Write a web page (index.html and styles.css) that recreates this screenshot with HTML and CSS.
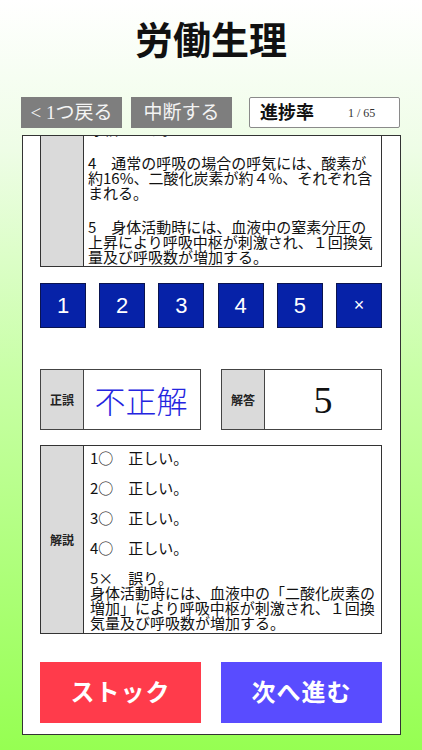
FILE: index.html
```html
<!DOCTYPE html>
<html lang="ja">
<head>
<meta charset="utf-8">
<link rel="stylesheet" href="styles.css">
</head>
<body>
<div class="screen">
  <h1 class="title">労働生理</h1>
  <div class="toolbar">
    <div class="tbtn">&lt; 1つ戻る</div>
    <div class="tbtn">中断する</div>
    <div class="progress"><span class="plabel">進捗率</span><span class="pnum">1 / 65</span></div>
  </div>
  <div class="panel">
    <div class="qbox">
      <div class="lab"></div>
      <div class="qtext">
        <p>呼吸という。</p>
        <p>4　通常の呼吸の場合の呼気には、酸素が<br>約16%、二酸化炭素が約４%、それぞれ含<br>まれる。</p>
        <p>5　身体活動時には、血液中の窒素分圧の<br>上昇により呼吸中枢が刺激され、１回換気<br>量及び呼吸数が増加する。</p>
      </div>
    </div>
    <div class="nums">
      <div class="num">1</div>
      <div class="num">2</div>
      <div class="num">3</div>
      <div class="num">4</div>
      <div class="num">5</div>
      <div class="num x">×</div>
    </div>
    <div class="results">
      <div class="rbox"><div class="rlab">正誤</div><div class="rval wrong">不正解</div></div>
      <div class="rbox"><div class="rlab">解答</div><div class="rval ans">5</div></div>
    </div>
    <div class="ebox">
      <div class="elab">解説</div>
      <div class="etext">
        <p>1○　正しい。</p>
        <p>2○　正しい。</p>
        <p>3○　正しい。</p>
        <p>4○　正しい。</p>
        <p>5×　誤り。<br>身体活動時には、血液中の「二酸化炭素の<br>増加」により呼吸中枢が刺激され、１回換<br>気量及び呼吸数が増加する。</p>
      </div>
    </div>
    <div class="actions">
      <div class="abtn stock">ストック</div>
      <div class="abtn next">次へ進む</div>
    </div>
  </div>
</div>
</body>
</html>
```

FILE: styles.css
```css
html, body {
  margin: 0;
  padding: 0;
}
body {
  width: 422px;
  height: 750px;
  overflow: hidden;
  background: linear-gradient(to bottom, #ffffff 0%, #eefde6 20%, #c8ffa6 50%, #96ff52 100%);
  font-family: "Noto Sans CJK JP", sans-serif;
}
.screen {
  display: flex;
  flex-direction: column;
  height: 750px;
}
.title {
  margin: 0;
  height: 84px;
  display: flex;
  align-items: center;
  justify-content: center;
  font-family: "Liberation Serif", "Noto Sans CJK JP", serif;
  font-weight: 700;
  font-size: 38px;
  line-height: 48px;
  color: #111;
  padding-bottom: 2px;
  box-sizing: border-box;
}
.toolbar {
  margin-top: 13px;
  height: 31px;
  padding-left: 21px;
  display: flex;
  align-items: stretch;
}
.tbtn {
  width: 101px;
  margin-right: 9px;
  background: #7e7e7e;
  color: #f4f4f4;
  font-family: "Liberation Serif", "Noto Sans CJK JP", serif;
  font-size: 19px;
  line-height: 24px;
  display: flex;
  align-items: center;
  justify-content: center;
  white-space: nowrap;
}
.tbtn + .tbtn {
  margin-right: 17px;
}
.progress {
  width: 151px;
  box-sizing: border-box;
  border: 1.5px solid #8a8a8a;
  border-radius: 2px;
  background: #fff;
  display: flex;
  align-items: center;
  padding-left: 10px;
}
.plabel {
  font-family: "Liberation Serif", "Noto Sans CJK JP", serif;
  font-weight: 700;
  font-size: 18px;
  line-height: 22px;
  color: #111;
  width: 88px;
}
.pnum {
  font-family: "Liberation Serif", serif;
  font-size: 12px;
  line-height: 14px;
  color: #333;
}
.panel {
  margin: 7px 0 0 22px;
  width: 379px;
  height: 600px;
  box-sizing: border-box;
  border: 1px solid #333;
  background: #fff;
  padding: 0 18px 0 17px;
  display: flex;
  flex-direction: column;
}
.qbox {
  height: 131px;
  box-sizing: border-box;
  border: 1px solid #333;
  border-top: none;
  display: flex;
  overflow: hidden;
}
.lab, .elab {
  width: 42px;
  flex: none;
  background: #dadada;
  border-right: 1px solid #333;
}
.qtext {
  flex: 1;
  display: flex;
  flex-direction: column;
  justify-content: flex-end;
  padding: 0 0 2px 4px;
  font-size: 15px;
  line-height: 15px;
  color: #111;
  overflow: hidden;
}
.qtext p {
  margin: 0 0 19px 0;
  white-space: nowrap;
}
.qtext p:last-child {
  margin-bottom: 0;
}
.nums {
  margin-top: 16px;
  height: 45px;
  display: flex;
  justify-content: space-between;
}
.num {
  width: 46px;
  box-sizing: border-box;
  background: #0622a8;
  border: 1px solid #0a1450;
  color: #fff;
  font-family: "Liberation Sans", sans-serif;
  font-size: 22px;
  display: flex;
  align-items: center;
  justify-content: center;
}
.num.x {
  font-size: 18px;
}
.results {
  margin-top: 41px;
  height: 61px;
  display: flex;
  justify-content: space-between;
}
.rbox {
  width: 161px;
  box-sizing: border-box;
  border: 1px solid #444;
  display: flex;
}
.rlab {
  width: 42px;
  flex: none;
  background: #dadada;
  border-right: 1px solid #444;
  display: flex;
  align-items: center;
  justify-content: center;
  font-family: "Liberation Serif", "Noto Sans CJK JP", serif;
  font-weight: 700;
  font-size: 12px;
  color: #222;
}
.rval {
  flex: 1;
  display: flex;
  align-items: center;
  justify-content: center;
}
.wrong {
  color: #2424e0;
  font-size: 31px;
  line-height: 40px;
  font-weight: 300;
  padding-right: 2px;
}
.ans {
  font-family: "Liberation Serif", serif;
  font-size: 38px;
  line-height: 44px;
  color: #111;
}
.ebox {
  margin-top: 15px;
  height: 189px;
  box-sizing: border-box;
  border: 1px solid #333;
  display: flex;
}
.elab {
  display: flex;
  align-items: center;
  justify-content: center;
  font-family: "Liberation Serif", "Noto Sans CJK JP", serif;
  font-weight: 700;
  font-size: 12px;
  color: #222;
}
.etext {
  flex: 1;
  padding: 4px 0 0 6px;
  font-size: 15px;
  line-height: 15px;
  color: #111;
  overflow: hidden;
}
.etext p {
  margin: 0 0 15px 0;
  white-space: nowrap;
}
.actions {
  margin-top: 28px;
  height: 61px;
  display: flex;
  justify-content: space-between;
}
.abtn {
  width: 161px;
  display: flex;
  align-items: center;
  justify-content: center;
  color: #fff;
  font-family: "Liberation Serif", "Noto Sans CJK JP", serif;
  font-weight: 700;
  font-size: 24px;
  line-height: 32px;
  letter-spacing: 1px;
}
.stock {
  background: #ff3b4b;
}
.next {
  background: #594cff;
}
```
